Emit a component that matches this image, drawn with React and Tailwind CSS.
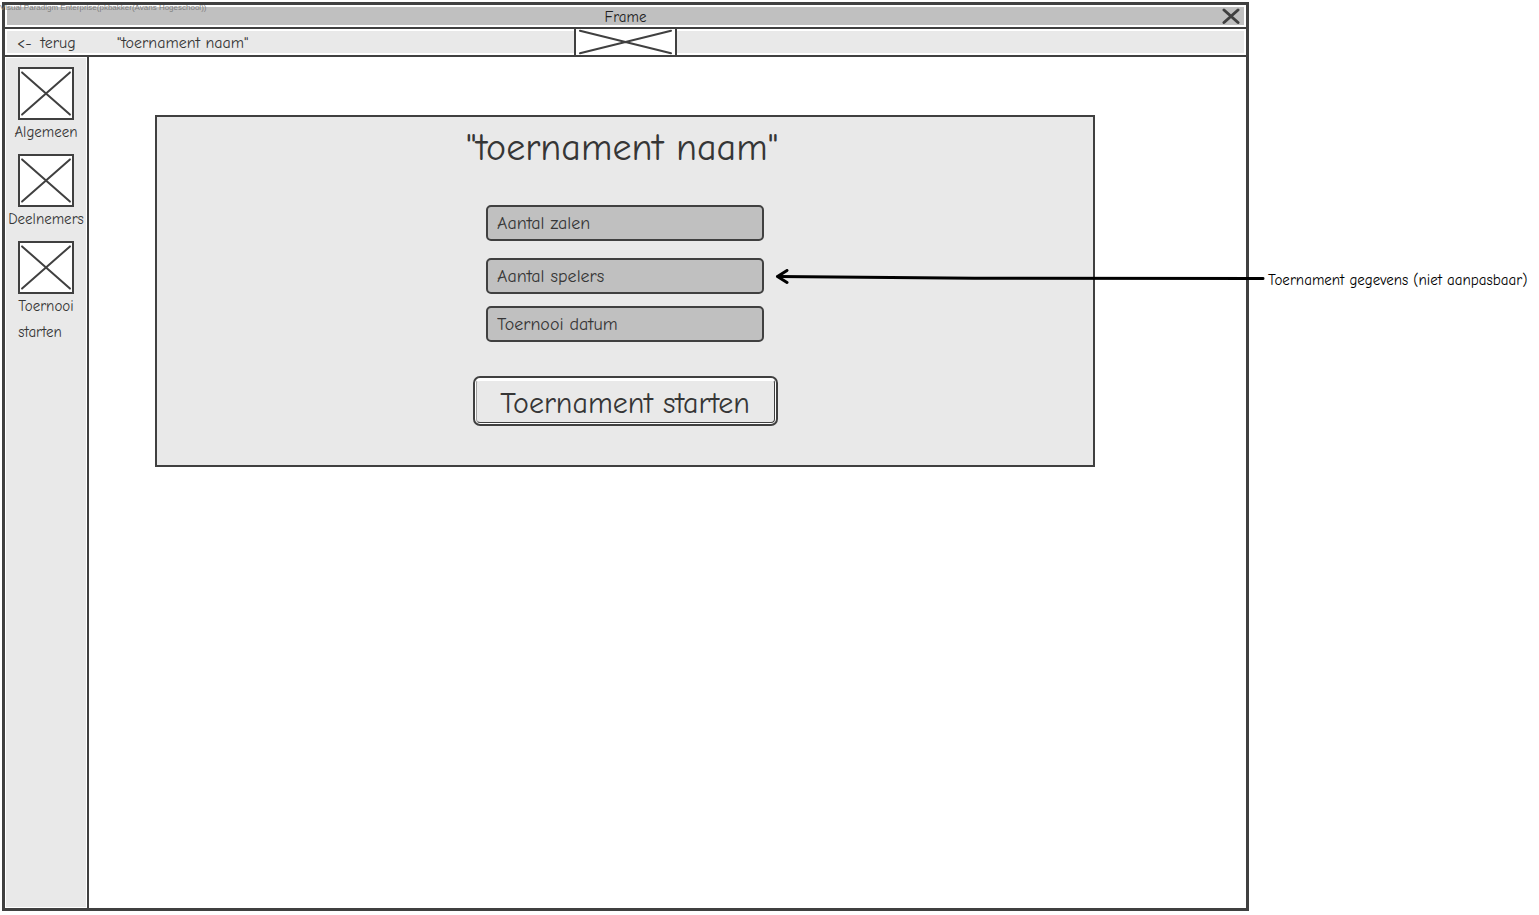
import React from "react";

function CrossBox({ className }) {
  return (
    <svg
      className={className}
      viewBox="0 0 100 100"
      preserveAspectRatio="none"
      fill="none"
      stroke="#404040"
      strokeWidth="2"
      strokeLinecap="round"
      aria-hidden="true"
    >
      <path d="M4 7 L96 93 M96 7 L4 93" vectorEffect="non-scaling-stroke" />
    </svg>
  );
}

const navItems = ["Algemeen", "Deelnemers", "Toernooi starten"];

function Sidebar() {
  return (
    <nav className="w-[84px] shrink-0 border-r-2 border-[#404040] p-px">
      <ul className="flex h-full flex-col gap-[9px] bg-[#e9e9e9] pt-[9px]">
        {navItems.map((item) => (
          <li key={item}>
            <a href="#" className="flex flex-col items-center">
              <span className="flex h-[53px] w-14 border-2 border-[#404040] bg-white">
                <CrossBox className="h-full w-full" />
              </span>
              <span className="-mt-px w-min text-[15px] leading-[26px]">{item}</span>
            </a>
          </li>
        ))}
      </ul>
    </nav>
  );
}

function DetailField({ label }) {
  return (
    <input
      type="text"
      readOnly
      aria-label={label}
      value={label}
      className="h-9 w-full rounded-[5px] border-2 border-[#404040] bg-[#c0c0c0] px-[9px] text-lg text-[#363636] outline-none"
    />
  );
}

function TournamentPanel() {
  return (
    <section className="mt-[58px] mr-[151px] ml-[66px] flex flex-col items-center border-2 border-[#404040] bg-[#e9e9e9] pt-1.5 pb-[39px]">
      <h1 className="mr-1.5 text-[38px] leading-[50px]">"toernament naam"</h1>
      <div className="mt-8 flex w-[278px] flex-col">
        <DetailField label="Aantal zalen" />
        <div className="mt-[17px] flex flex-col gap-3">
          <DetailField label="Aantal spelers" />
          <DetailField label="Toernooi datum" />
        </div>
      </div>
      <button
        type="button"
        className="mt-[34px] h-[50px] w-[305px] rounded-[7px] border-2 border-[#404040] bg-white p-px"
      >
        <span className="flex h-full items-center justify-center rounded-[4px] border border-t-2 border-[#404040] border-t-white border-l-[#a0a0a0] bg-[#e9e9e9] pt-1 text-[30px] leading-9">
          Toernament starten
        </span>
      </button>
    </section>
  );
}

function Annotation() {
  return (
    <aside className="relative mt-[266px] ml-[19px] h-6 w-[258px] shrink-0 text-[15px] leading-6 whitespace-nowrap text-black">
      Toernament gegevens (niet aanpasbaar)
      <svg
        className="absolute top-px right-full mr-[3px] h-5 w-[490px]"
        viewBox="0 0 490 20"
        fill="none"
        stroke="#000"
        strokeWidth="3"
        strokeLinecap="round"
        strokeLinejoin="round"
        aria-hidden="true"
      >
        <path d="M3 7.5 C60 8 130 9 200 9.3 L488 9.5" />
        <path d="M12 1.5 L2.5 7.5 L12 13.5" />
      </svg>
    </aside>
  );
}

export default function App() {
  return (
    <div className="relative flex min-h-screen items-stretch overflow-hidden bg-white pt-0.5 pr-[13px] pb-1 pl-0.5 font-['Comic_Sans_MS','Comic_Neue','Noto_Sans',sans-serif] text-[#363636] [font-variant-ligatures:none]">
      <div className="flex min-w-0 flex-1 flex-col border-[3px] border-[#404040]">
        <header className="border-b-2 border-[#404040] p-0.5">
          <div className="relative flex h-[18px] items-center justify-center bg-[#c0c0c0] text-[15px] leading-5 text-[#202020]">
            <span className="pt-0.5">Frame</span>
            <button type="button" aria-label="Sluiten" className="absolute right-1 flex">
              <svg
                className="h-[18px] w-[18px]"
                viewBox="0 0 18 18"
                stroke="#404040"
                strokeWidth="3"
                strokeLinecap="round"
                aria-hidden="true"
              >
                <path d="M2 3 L16 15.5 M16 3 L2 15.5" />
              </svg>
            </button>
          </div>
        </header>
        <div className="grid h-7 grid-cols-[1fr_103px_1fr] grid-rows-1 border-b-2 border-[#404040] text-base">
          <div className="min-h-0 py-0.5 pl-0.5">
            <div className="flex h-full items-center bg-[#e9e9e9] pt-0.5 pl-[10px]">
              <a href="#" className="flex w-[100px] gap-[9px]">
                <span>&lt;-</span>
                <span>terug</span>
              </a>
              <span>"toernament naam"</span>
            </div>
          </div>
          <div className="flex min-h-0 border-x-2 border-[#404040]">
            <CrossBox className="h-full w-full" />
          </div>
          <div className="min-h-0 py-0.5 pr-0.5">
            <div className="h-full bg-[#e9e9e9]" />
          </div>
        </div>
        <div className="flex flex-1">
          <Sidebar />
          <main className="min-w-0 flex-1">
            <TournamentPanel />
          </main>
        </div>
      </div>
      <Annotation />
      <p className="absolute top-0.5 left-0 font-['Liberation_Sans',Arial,sans-serif] text-[8px] leading-[11px] whitespace-nowrap text-[#808080]">
        Visual Paradigm Enterprise(pkbakker(Avans Hogeschool))
      </p>
    </div>
  );
}
